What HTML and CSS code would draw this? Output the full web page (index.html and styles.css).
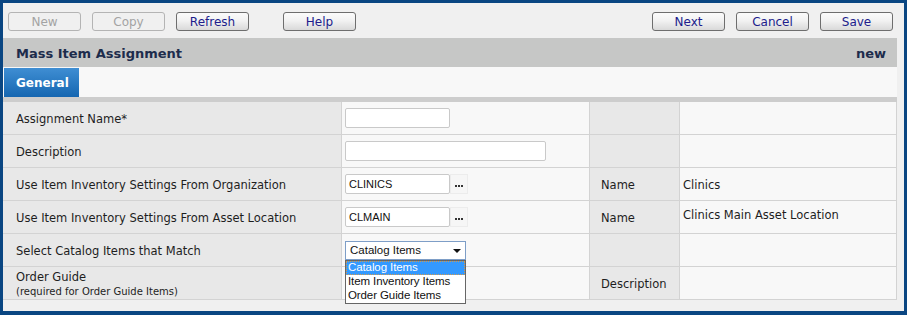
FILE: index.html
```html
<!DOCTYPE html>
<html>
<head>
<meta charset="utf-8">
<link rel="stylesheet" href="styles.css">
</head>
<body>
<div class="window">
  <div class="toolbar">
    <div class="group">
      <span class="btn disabled">New</span>
      <span class="btn disabled">Copy</span>
      <span class="btn">Refresh</span>
      <span class="btn help">Help</span>
    </div>
    <div class="group">
      <span class="btn">Next</span>
      <span class="btn">Cancel</span>
      <span class="btn">Save</span>
    </div>
  </div>
  <div class="panel">
    <div class="titlebar"><span>Mass Item Assignment</span><span>new</span></div>
    <div class="tabs"><div class="tab">General</div></div>
    <div class="sep"></div>
    <div class="form">
      <div class="lbl">Assignment Name*</div>
      <div class="val"><span class="input"></span></div>
      <div class="lbl2"></div>
      <div class="val2"></div>

      <div class="lbl">Description</div>
      <div class="val"><span class="input wide"></span></div>
      <div class="lbl2"></div>
      <div class="val2"></div>

      <div class="lbl">Use Item Inventory Settings From Organization</div>
      <div class="val"><span class="input">CLINICS</span><span class="lookup"><i></i><i></i><i></i></span></div>
      <div class="lbl2">Name</div>
      <div class="val2">Clinics</div>

      <div class="lbl">Use Item Inventory Settings From Asset Location</div>
      <div class="val"><span class="input">CLMAIN</span><span class="lookup"><i></i><i></i><i></i></span></div>
      <div class="lbl2">Name</div>
      <div class="val2 top">Clinics Main Asset Location</div>

      <div class="lbl">Select Catalog Items that Match</div>
      <div class="val sel-cell">
        <span class="select">Catalog Items<span class="arrow"></span></span>
        <div class="droplist">
          <div class="opt active">Catalog Items</div>
          <div class="opt">Item Inventory Items</div>
          <div class="opt">Order Guide Items</div>
        </div>
      </div>
      <div class="lbl2"></div>
      <div class="val2"></div>

      <div class="lbl two"><span>Order Guide</span><small>(required for Order Guide Items)</small></div>
      <div class="val"></div>
      <div class="lbl2">Description</div>
      <div class="val2"></div>
    </div>
  </div>
</div>
</body>
</html>
```

FILE: styles.css
```css
* { box-sizing: border-box; }
html, body { margin: 0; padding: 0; }
body { width: 907px; height: 315px; overflow: hidden; font-family: "DejaVu Sans", Verdana, sans-serif; }

.window {
  width: 907px;
  height: 315px;
  border: 3px solid #0a4682;
  border-bottom-width: 4px;
  background: #f0f0f0;
}

.toolbar {
  height: 35px;
  padding: 9px 11px 0 5px;
  display: flex;
  justify-content: space-between;
  align-items: flex-start;
}
.group { display: flex; gap: 11px; }
.btn {
  width: 73px;
  height: 19px;
  border: 1px solid #6e6e6e;
  border-radius: 3px;
  background: linear-gradient(#fbfbfb 0%, #f2f2f2 45%, #d9d9d9 100%);
  color: #201c8c;
  font-size: 12px;
  line-height: 18px;
  text-align: center;
}
.btn.disabled {
  border-color: #b4b4b4;
  background: #f0f0f0;
  color: #a3a3a3;
}
.btn.help { margin-left: 23px; }

.panel { margin-right: 7px; }
.titlebar {
  height: 29px;
  background: #c6c7c6;
  padding: 1px 11px 0 13px;
  display: flex;
  justify-content: space-between;
  align-items: center;
  font-weight: bold;
  font-size: 13px;
  color: #1d2c4c;
}
.tabs { height: 30px; background: #f8f8f8; padding: 1px 0 0 1px; }
.tab {
  width: 75px;
  height: 29px;
  background: linear-gradient(#3f8ed3, #1566b1);
  color: #fff;
  font-weight: bold;
  font-size: 12px;
  line-height: 30px;
  padding-left: 12px;
}
.sep { height: 5px; background: #cdcdcd; }

.form {
  display: grid;
  grid-template-columns: 338px 247px 89px 216px;
  grid-auto-rows: 32px;
  gap: 1px;
  background: #d3d3d3;
  padding: 0 1px 1px 0;
  font-size: 11.5px;
  color: #1e1e1e;
}
.lbl, .lbl2 { background: #e8e8e8; display: flex; align-items: center; padding-top: 2px; }
.val, .val2 { background: #f8f8f8; display: flex; align-items: center; }
.val2 { padding-top: 2px; }
.lbl { padding-left: 13px; }
.lbl2 { padding-left: 11px; }
.val { padding-left: 3px; }
.val2 { padding-left: 3px; }
.val2.top { align-items: flex-start; padding-top: 7px; }
.lbl.two { flex-direction: column; align-items: flex-start; justify-content: center; line-height: 15px; padding-top: 3px; }
.lbl.two small { font-size: 10px; line-height: 14px; }

.input {
  width: 105px;
  height: 20px;
  border: 1px solid #c9c9c9;
  border-radius: 2px;
  background: #fff;
  font-family: "Liberation Sans", Arial, sans-serif;
  font-size: 11px;
  line-height: 18px;
  padding-left: 3px;
  color: #111;
}
.input.wide { width: 201px; }
.lookup {
  width: 18px;
  height: 20px;
  border: 1px solid #ececec;
  background: #f6f6f6;
  display: flex;
  align-items: center;
  justify-content: center;
  gap: 1px;
  padding-top: 4px;
}
.lookup i { width: 2px; height: 2px; background: #333; display: block; }

.sel-cell { position: relative; }
.select {
  width: 121px;
  height: 19px;
  border: 1px solid #7e9ec7;
  background: #fff;
  font-family: "Liberation Sans", Arial, sans-serif;
  font-size: 11.5px;
  line-height: 17px;
  padding-left: 4px;
  position: relative;
  color: #111;
}
.arrow {
  position: absolute;
  right: 4px;
  top: 7px;
  width: 0;
  height: 0;
  border-left: 4px solid transparent;
  border-right: 4px solid transparent;
  border-top: 4px solid #111;
}
.droplist {
  position: absolute;
  left: 3px;
  top: 26px;
  width: 121px;
  border: 1px solid #666;
  background: #fff;
  z-index: 2;
  font-family: "Liberation Sans", Arial, sans-serif;
  font-size: 11.5px;
  color: #111;
}
.opt { height: 14px; line-height: 13px; padding-left: 2px; letter-spacing: -0.1px; }
.opt.active { background: #3399ff; color: #fff; outline: 1px dotted #d59a4a; outline-offset: -1px; }
```
